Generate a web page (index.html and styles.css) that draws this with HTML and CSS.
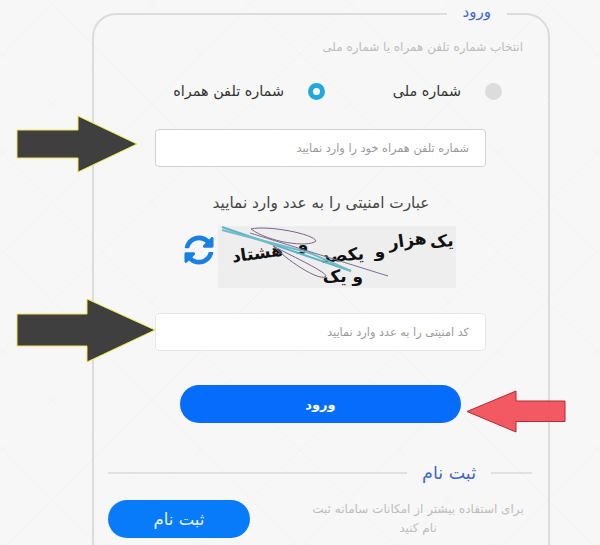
FILE: index.html
```html
<!DOCTYPE html>
<html lang="fa" dir="rtl">
<head>
<meta charset="utf-8">
<title>ورود</title>
<link rel="stylesheet" href="styles.css">
</head>
<body>
<main class="card">
  <h1 class="legend">ورود</h1>
  <p class="hint">انتخاب شماره تلفن همراه یا شماره ملی</p>
  <div class="choices">
    <label class="choice"><span class="radio"></span><span>شماره ملی</span></label>
    <label class="choice choice-on"><span class="radio radio-on"></span><span>شماره تلفن همراه</span></label>
  </div>
  <input class="field" type="text" placeholder="شماره تلفن همراه خود را وارد نمایید">
  <h2 class="captcha-title">عبارت امنیتی را به عدد وارد نمایید</h2>
  <div class="captcha-row">
    <svg class="captcha" viewBox="0 0 238 62" aria-label="captcha">
      <rect width="238" height="62" fill="#eeeeee"/>
      <g class="captcha-text">
        <text transform="translate(224 21) rotate(-4)">یک</text>
        <text transform="translate(190 20) rotate(-8)">هزار</text>
        <text transform="translate(162 31)">و</text>
        <text transform="translate(125 35) rotate(-5)">یکصد</text>
        <text transform="translate(85 24)">و</text>
        <text transform="translate(40 33) rotate(-8)">هشتاد</text>
        <text transform="translate(125 56)">و یک</text>
      </g>
      <path d="M4 1 L133 45" stroke="#5fb4c6" stroke-width="2" fill="none"/>
      <path d="M4 4 L92 27 L133 45" stroke="#6fbccb" stroke-width="2" fill="none"/>
      <path d="M32 7 L170 50" stroke="#7d6f8c" stroke-width="1" fill="none"/>
      <path d="M33 3 C50 -1 96 8 98 15 C90 22 50 16 33 3 M55 20 C78 32 108 46 108 50 C104 56 76 40 55 20" stroke="#7a6585" stroke-width="1" fill="none"/>
    </svg>
    <svg class="refresh" viewBox="0 0 512 512" aria-label="refresh"><path d="M370.72 133.28C339.458 104.008 298.888 87.962 255.848 88c-77.458.068-144.328 53.178-162.791 126.85-1.344 5.363-6.122 9.15-11.651 9.15H24.103c-7.498 0-13.194-6.807-11.807-14.176C33.933 94.924 134.813 8 256 8c66.448 0 126.791 26.136 171.315 68.685L463.03 40.97C478.149 25.851 504 36.559 504 57.941V192c0 13.255-10.745 24-24 24H345.941c-21.382 0-32.09-25.851-16.971-40.971l41.75-41.749zM32 296h134.059c21.382 0 32.09 25.851 16.971 40.971l-41.75 41.75c31.262 29.273 71.835 45.319 114.876 45.28 77.418-.07 144.315-53.144 162.787-126.849 1.344-5.363 6.122-9.15 11.651-9.15h57.304c7.498 0 13.194 6.807 11.807 14.176C478.067 417.076 377.187 504 256 504c-66.448 0-126.791-26.136-171.315-68.685L48.97 471.03C33.851 486.149 8 475.441 8 454.059V320c0-13.255 10.745-24 24-24z"/></svg>
  </div>
  <input class="field field-second" type="text" placeholder="کد امنیتی را به عدد وارد نمایید">
  <button class="login" type="button">ورود</button>
  <div class="divider"><span class="rule rule-short"></span><span class="divider-text">ثبت نام</span><span class="rule rule-long"></span></div>
  <div class="register">
    <p class="register-text">برای استفاده بیشتر از امکانات سامانه ثبت نام کنید</p>
    <button class="signup" type="button">ثبت نام</button>
  </div>
</main>
<svg class="mark mark-one" viewBox="0 0 123 58"><path d="M1 15H62V1L121 29L62 57V43H1Z"/></svg>
<svg class="mark mark-two" viewBox="0 0 141 66"><path d="M1 16H71V1L139 32L71 64V48H1Z"/></svg>
<svg class="mark mark-red" viewBox="0 0 100 43"><path d="M1 21.500L50 1V11H99V31.500H50V42Z"/></svg>
</body>
</html>
```
FILE: styles.css
```css
* { box-sizing: border-box; }
html, body { margin: 0; height: 545px; overflow: hidden; }
body {
  position: relative;
  font-family: "DejaVu Sans", "Noto Sans", sans-serif;
  color: #333;
  background-color: #f7f7f7;
  background-image:
    repeating-linear-gradient(45deg, transparent 0 69px, #f2f2f2 69px 70px),
    repeating-linear-gradient(-45deg, transparent 0 69px, #f2f2f2 69px 70px);
}
.card {
  position: relative;
  width: 458px;
  height: 545px;
  margin: 13px 50px 0 0;
  padding: 0 16px 0 14px;
  border: 2px solid #dcdcdc;
  border-bottom: 0;
  border-radius: 24px 24px 0 0;
}
.legend {
  position: absolute;
  top: -15px;
  right: 41px;
  margin: 0;
  padding: 0 16px;
  background: #f7f7f7;
  color: #3c66cf;
  font-size: 15px;
  font-weight: 400;
  line-height: 24px;
}
.hint {
  margin: 22px 9px 0 0;
  color: #bdbdbd;
  font-size: 12px;
  line-height: 20px;
}
.choices {
  display: flex;
  margin: 22px 30px 0 0;
  height: 24px;
  align-items: center;
}
.choice {
  display: flex;
  align-items: center;
  gap: 24px;
  font-size: 14.400px;
  color: #333;
  width: 177px;
}
.radio {
  width: 17px;
  height: 17px;
  border-radius: 50%;
  background: #dcdcdc;
  flex: none;
}
.radio-on {
  background: #fff;
  border: 5px solid #22a7e0;
}
.field {
  display: block;
  width: 331px;
  height: 38px;
  margin: 26px 46px 0 0;
  padding: 0 16px;
  border: 1px solid #d2d2d2;
  border-radius: 4px;
  background: #fff;
  font: 11.300px "DejaVu Sans", sans-serif;
  outline: 0;
}
.field::placeholder { color: #999; opacity: 1; }
.field-second {
  margin-top: 25px;
  border-color: #e6e6e6;
}
.captcha-title {
  margin: 24px 0 0;
  padding-left: 2px;
  text-align: center;
  font-size: 15.300px;
  font-weight: 400;
  line-height: 24px;
  color: #444;
}
.captcha-row {
  display: flex;
  align-items: center;
  gap: 4px;
  margin: 11px 76px 0 0;
}
.captcha { width: 238px; height: 62px; flex: none; }
.captcha-text { font: 700 17px "DejaVu Sans", sans-serif; fill: #111; text-anchor: middle; }
.refresh { width: 30px; height: 30px; margin: 0 0 14px 0; fill: #1a7fe3; flex: none; }
.login {
  display: block;
  width: 281px;
  height: 38px;
  margin: 34px 71px 0 0;
  border: 0;
  border-radius: 19px;
  background: #056cfb;
  color: #fff;
  font: 700 13px "DejaVu Sans", sans-serif;
}
.divider {
  display: flex;
  align-items: center;
  gap: 15px;
  margin-top: 38px;
  height: 24px;
}
.rule { height: 2px; background: #e0e0e0; }
.rule-short { width: 41px; }
.rule-long { flex: 1; }
.divider-text { color: #3c66cf; font-size: 17.500px; }
.register {
  display: flex;
  justify-content: space-between;
  margin-top: 15px;
}
.register-text {
  width: 216px;
  margin: 0 6px 0 0;
  color: #bdbdbd;
  font-size: 12px;
  line-height: 19px;
  text-align: center;
}
.signup {
  width: 142px;
  height: 38px;
  border: 0;
  border-radius: 19px;
  background: #087bfb;
  color: #e8f3ff;
  font: 16.500px "DejaVu Sans", sans-serif;
}
.mark { position: absolute; }
.mark path { stroke-width: 1; }
.mark-one { left: 16px; top: 115px; width: 123px; height: 58px; }
.mark-two { left: 16px; top: 298px; width: 141px; height: 66px; }
.mark-one path, .mark-two path { fill: #3b3b3b; fill-opacity: .98; stroke: #f4e64a; }
.mark-red { left: 466px; top: 390px; width: 100px; height: 43px; }
.mark-red path { fill: #f2505a; fill-opacity: .95; stroke: #b52a33; }
```
